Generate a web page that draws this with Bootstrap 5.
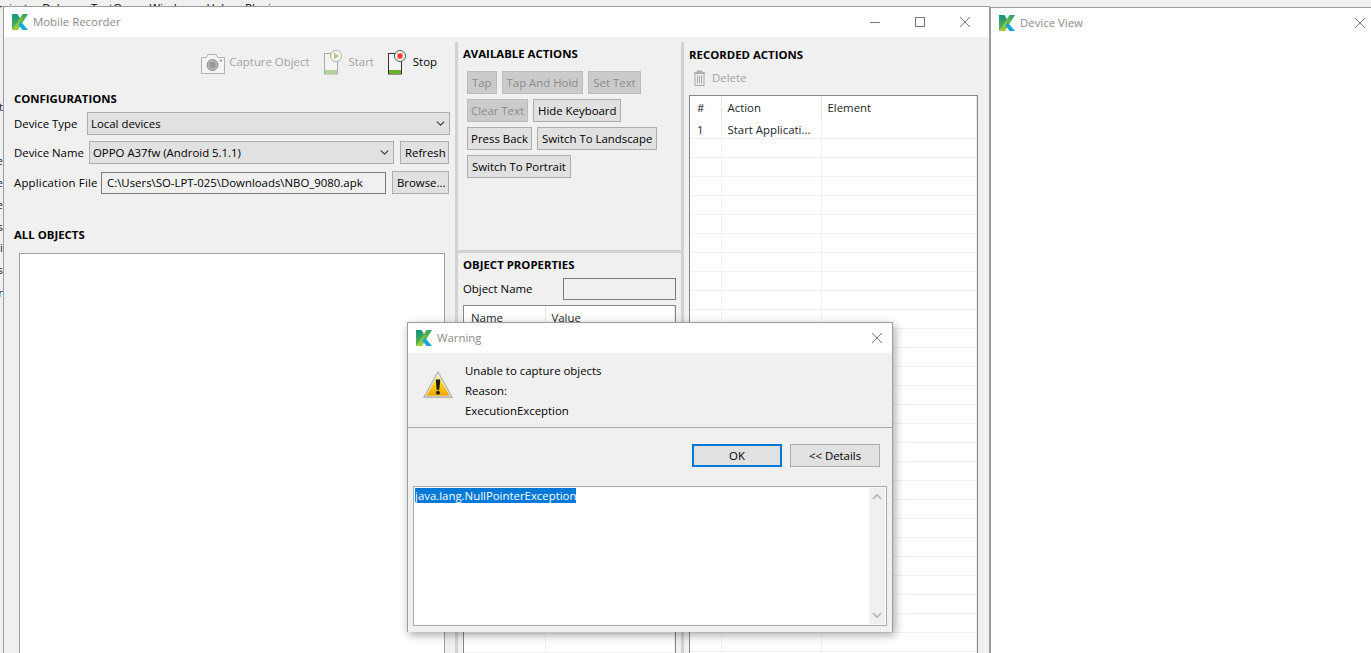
<!DOCTYPE html>
<html lang="en">
  <head>
    <meta charset="UTF-8" />
    <meta name="viewport" content="width=device-width, initial-scale=1.0" />
    <title>Mobile Recorder</title>
    <link href="https://cdn.jsdelivr.net/npm/bootstrap@5.3.0/dist/css/bootstrap.min.css" rel="stylesheet" />
    <style>
      html, body {
        height: 100%;
        overflow: hidden;
      }
      body {
        background-color: #f0f0f0;
        font-family: "Open Sans", "Liberation Sans", sans-serif;
        font-size: 11.4px;
        line-height: 16px;
        color: #000;
      }
      .app-menu {
        gap: 14px;
        margin-left: -9px;
        height: 16px;
      }
      .back-glyphs {
        position: absolute;
        left: 0;
        top: 0;
        width: 3px;
        height: 653px;
        overflow: hidden;
      }
      .back-glyphs span {
        position: absolute;
        right: 0;
        color: #222;
      }
      .os-window {
        position: absolute;
        background: #fff;
        border: 1px solid #9c9c9c;
        border-bottom: 0;
      }
      .win-main {
        left: 3px;
        top: 6px;
        width: 987px;
        height: 647px;
      }
      .win-device {
        left: 990px;
        top: 7px;
        width: 381px;
        height: 646px;
        border-right: 0;
      }
      .win-dialog {
        left: 407px;
        top: 322px;
        width: 486px;
        height: 310px;
        border-bottom: 1px solid #9c9c9c;
        box-shadow: 2px 3px 9px rgba(0, 0, 0, 0.35);
      }
      .title-bar {
        height: 30px;
        padding-left: 8px;
        color: #8a8a8a;
        background: #fff;
      }
      .title-bar svg.k-logo {
        margin-right: 5px;
        flex: none;
      }
      .win-controls {
        gap: 33px;
        margin-left: auto;
        padding-right: 18px;
      }
      .win-controls-device {
        padding-right: 5px;
      }
      .win-controls-dialog {
        padding-right: 9px;
      }
      .win-body {
        height: 616px;
        background: #f0f0f0;
      }
      .pane-left {
        width: 451px;
        padding: 0 5px 0 10px;
      }
      .pane-mid {
        width: 223px;
      }
      .pane-right {
        flex: 1;
        padding: 10px 11px 0 5px;
        min-width: 0;
      }
      .split-v {
        width: 3px;
        margin-top: 5px;
        background: #d2d2d2;
        flex: none;
      }
      .split-h {
        height: 3px;
        background: #d2d2d2;
        flex: none;
      }
      .tool-row {
        height: 54px;
        padding: 13px 13px 0 0;
        color: #a3a3a3;
      }
      .tool-item {
        gap: 4px;
      }
      .tool-item span {
        margin-bottom: 2px;
      }
      .tool-phone {
        gap: 7px;
      }
      .tool-item + .tool-item {
        margin-left: 14px;
      }
      .tool-on {
        color: #000;
      }
      .sect-title {
        font-weight: 700;
        height: 16px;
        white-space: nowrap;
      }
      .field-row {
        height: 23px;
      }
      .field-type { margin-top: 5px; }
      .field-name { margin-top: 6px; }
      .field-file { margin-top: 7px; }
      .form-select.win-select {
        height: 23px;
        padding: 0 20px 0 3px;
        font-size: 11.4px;
        line-height: 20px;
        border: 1px solid #adadad;
        border-radius: 0;
        background-color: #e1e1e1;
        background-size: 11px 9px;
        background-position: right 3px center;
        color: #000;
        min-width: 0;
      }
      .win-input {
        height: 22px;
        border: 1px solid #7a7a7a;
        background: #f0f0f0;
        padding: 0 5px;
        white-space: nowrap;
        line-height: 20px;
      }
      .btn.win-btn {
        height: 23px;
        padding: 0 4px;
        font-size: 11.4px;
        line-height: 20px;
        border: 1px solid #adadad;
        border-radius: 0;
        background: #e1e1e1;
        color: #000;
        white-space: nowrap;
      }
      .btn.win-btn:disabled {
        background: #cbcbcb;
        border-color: #bcbcbc;
        color: #8b8b8b;
        opacity: 1;
      }
      .btn.win-ok {
        border: 2px solid #0078d7;
      }
      .btn.bw-clear { width: 61px; padding: 0; }
      .btn.bw-press { width: 65px; padding: 0; }
      .lab-type { width: 73px; flex: none; margin: 0; }
      .lab-name { width: 75px; flex: none; margin: 0; }
      .lab-file { width: 87px; flex: none; margin: 0; letter-spacing: 0.2px; }
      .form-select.win-sel-name { width: 305px; flex: none; }
      .win-file { width: 285px; flex: none; }
      .btn.win-refresh { width: 49px; flex: none; margin-left: 6px; }
      .btn.win-browse { width: 57px; flex: none; margin-left: 6px; }
      .objects-title { margin-top: 33px; }
      .tree-box {
        flex: 1;
        margin: 10px 5px 0 5px;
        background: #fff;
        border: 1px solid #a0a0a0;
        border-bottom: 0;
      }
      .action-wrap {
        gap: 5px 5px;
        padding: 9px 20px 0 9px;
      }
      .pane-actions {
        height: 213px;
        padding-top: 9px;
      }
      .actions-title { padding-left: 5px; }
      .pane-props {
        flex: 1;
        padding: 4px 5px 0 5px;
        min-height: 0;
      }
      .props-name {
        margin: 5px 0;
      }
      .props-input {
        width: 113px;
      }
      .table.win-grid {
        margin: 0;
        table-layout: fixed;
        --bs-table-bg: #fff;
        font-size: 11.4px;
      }
      .win-grid th, .win-grid td {
        height: 19px;
        padding: 0 6px;
        line-height: 18px;
        font-weight: 400;
        border: 0;
        border-right: 1px solid #f0f0f0;
        border-bottom: 1px solid #f0f0f0;
        white-space: nowrap;
        overflow: hidden;
      }
      .win-grid th:first-child, .win-grid td:first-child {
        padding-left: 7px;
      }
      .win-grid th {
        height: 23px;
        line-height: 22px;
        border-right: 1px solid #e6e6e6;
        border-bottom: 0;
      }
      .win-grid tbody tr:first-child td {
        padding-top: 3px;
        line-height: 15px;
      }
      .grid-box {
        background: #fff;
        border: 1px solid #828790;
        border-bottom: 0;
        overflow: hidden;
        flex: 1;
        min-height: 0;
      }
      .delete-row {
        height: 25px;
        margin: 2px 0 5px 4px;
        gap: 6px;
        color: #a3a3a3;
      }
      .dlg-body {
        background: #f0f0f0;
        height: 279px;
      }
      .dlg-msg {
        height: 75px;
        padding: 8px 0 0 15px;
        border-bottom: 1px solid #a9a9a9;
      }
      .warn-icon {
        margin-top: 10px;
        flex: none;
      }
      .dlg-lines {
        margin-left: 12px;
      }
      .dlg-lines div {
        height: 20px;
        line-height: 20px;
      }
      .dlg-btns {
        padding: 16px 12px 0 0;
        gap: 8px;
      }
      .dlg-btns .btn.win-btn {
        width: 90px;
      }
      .detail-box {
        height: 140px;
        margin: 19px 5px 0 5px;
        background: #fff;
        border: 1px solid #a9a9a9;
        padding: 1px;
      }
      .detail-text {
        background: #0078d7;
        color: #fff;
        height: 15px;
        line-height: 15px;
      }
      .detail-scroll {
        width: 16px;
        height: 136px;
        background: #f0f0f0;
        margin-left: auto;
        padding: 5px 0;
      }
    </style>
  </head>
  <body>
    <div class="app-menu d-flex">
      <span>Project</span><span>Debug</span><span>TestOne</span><span>Window</span><span>Help</span><span>Plugin</span>
    </div>
    <div class="back-glyphs">
      <span style="top: 99px">t</span><span style="top: 153px">e</span><span style="top: 175px">e</span><span style="top: 197px">e</span><span style="top: 219px">s</span><span style="top: 240px">i</span><span style="top: 262px">s</span><span style="top: 285px">r</span>
    </div>

    <svg width="0" height="0" class="position-absolute">
      <defs>
        <linearGradient id="kLeft" x1="0" y1="0" x2="0" y2="1">
          <stop offset="0" stop-color="#14957f" />
          <stop offset="1" stop-color="#5fb548" />
        </linearGradient>
        <linearGradient id="kArm" x1="1" y1="0" x2="0" y2="1">
          <stop offset="0" stop-color="#1f9a6e" />
          <stop offset="0.5" stop-color="#7cc242" />
          <stop offset="1" stop-color="#a6ce39" />
        </linearGradient>
        <linearGradient id="warnFill" x1="0" y1="0" x2="0" y2="1">
          <stop offset="0" stop-color="#fff3a0" />
          <stop offset="0.4" stop-color="#fcd40f" />
          <stop offset="1" stop-color="#eea400" />
        </linearGradient>
        <symbol id="kMark" viewBox="0 0 16 16">
          <polygon points="0,0 5.5,0 9,6 3,13 0,16" fill="url(#kLeft)" />
          <polygon points="10.5,0 16,0 6,16 0,16" fill="url(#kArm)" />
          <polygon points="8.8,7.5 16,16 10.5,16 6.6,10.8" fill="#0fa9e0" />
        </symbol>
      </defs>
    </svg>

    <!-- main recorder window -->
    <div class="os-window win-main">
      <div class="title-bar d-flex align-items-center">
        <svg class="k-logo" width="16" height="16"><use href="#kMark" /></svg>
        <span>Mobile Recorder</span>
        <div class="win-controls d-flex align-items-center">
          <svg width="12" height="12" viewBox="0 0 12 12"><path d="M1 6.5h10" stroke="#777" fill="none" /></svg>
          <svg width="12" height="12" viewBox="0 0 12 12"><rect x="1.5" y="1.5" width="9" height="9" stroke="#777" fill="none" /></svg>
          <svg width="12" height="12" viewBox="0 0 12 12"><path d="M1 1l10 10M11 1L1 11" stroke="#777" fill="none" /></svg>
        </div>
      </div>
      <div class="win-body d-flex">
        <div class="pane-left d-flex flex-column">
          <div class="tool-row d-flex justify-content-end align-items-start">
            <div class="tool-item d-flex align-items-center">
              <svg width="24" height="25" viewBox="0 0 24 25">
                <path d="M.5 7.5h5l1.5-3h8l1.5 3h7v16h-23z" fill="#f4f4f4" stroke="#b0b0b0" />
                <circle cx="11.5" cy="15" r="5.5" fill="#b5b5b5" stroke="#8f8f8f" />
                <circle cx="11.5" cy="15" r="3.2" fill="#999" />
                <circle cx="20" cy="10.5" r="1.2" fill="#a8a8a8" />
              </svg>
              <span>Capture Object</span>
            </div>
            <div class="tool-item tool-phone d-flex align-items-center">
              <svg width="18" height="25" viewBox="0 0 18 25">
                <rect x="0.5" y="3.5" width="13" height="20.5" fill="#f4f4f4" stroke="#a9a9a9" />
                <rect x="1" y="20" width="12" height="4" fill="#b4d39a" />
                <circle cx="12" cy="6" r="5.5" fill="#fff" stroke="#a9a9a9" />
                <polygon points="10,2.5 15.5,6 10,9.5" fill="#a6d488" />
              </svg>
              <span>Start</span>
            </div>
            <div class="tool-item tool-phone tool-on d-flex align-items-center">
              <svg width="18" height="25" viewBox="0 0 18 25">
                <rect x="0.5" y="3.5" width="13" height="20.5" fill="#f4f4f4" stroke="#333" />
                <rect x="1" y="20" width="12" height="4" fill="#69b02f" />
                <circle cx="12" cy="6" r="5.5" fill="#fff" stroke="#555" />
                <rect x="9.5" y="3.5" width="5" height="5" fill="#f0392b" />
              </svg>
              <span>Stop</span>
            </div>
          </div>
          <div class="sect-title">CONFIGURATIONS</div>
          <div class="field-row field-type d-flex align-items-center">
            <label class="lab-type">Device Type</label>
            <select class="form-select win-select flex-fill"><option>Local devices</option></select>
          </div>
          <div class="field-row field-name d-flex align-items-center">
            <label class="lab-name">Device Name</label>
            <select class="form-select win-select win-sel-name"><option>OPPO A37fw (Android 5.1.1)</option></select>
            <button class="btn win-btn win-refresh">Refresh</button>
          </div>
          <div class="field-row field-file d-flex align-items-center">
            <label class="lab-file">Application File</label>
            <div class="win-input win-file">C:\Users\SO-LPT-025\Downloads\NBO_9080.apk</div>
            <button class="btn win-btn win-browse">Browse...</button>
          </div>
          <div class="sect-title objects-title">ALL OBJECTS</div>
          <div class="tree-box"></div>
        </div>
        <div class="split-v"></div>
        <div class="pane-mid d-flex flex-column">
          <div class="pane-actions">
            <div class="sect-title actions-title">AVAILABLE ACTIONS</div>
            <div class="action-wrap d-flex flex-wrap">
              <button class="btn win-btn" disabled>Tap</button>
              <button class="btn win-btn" disabled>Tap And Hold</button>
              <button class="btn win-btn" disabled>Set Text</button>
              <button class="btn win-btn bw-clear" disabled>Clear Text</button>
              <button class="btn win-btn">Hide Keyboard</button>
              <button class="btn win-btn bw-press">Press Back</button>
              <button class="btn win-btn">Switch To Landscape</button>
              <button class="btn win-btn">Switch To Portrait</button>
            </div>
          </div>
          <div class="split-h"></div>
          <div class="pane-props d-flex flex-column">
            <div class="sect-title">OBJECT PROPERTIES</div>
            <div class="props-name d-flex align-items-center justify-content-between">
              <span>Object Name</span>
              <div class="win-input props-input"></div>
            </div>
            <div class="grid-box">
              <table class="table win-grid" id="propsGrid">
                <colgroup><col style="width: 81px" /><col /></colgroup>
                <thead><tr><th>Name</th><th>Value</th></tr></thead>
                <tbody></tbody>
              </table>
            </div>
          </div>
        </div>
        <div class="split-v"></div>
        <div class="pane-right d-flex flex-column">
          <div class="sect-title">RECORDED ACTIONS</div>
          <div class="delete-row d-flex align-items-center">
            <svg width="13" height="16" viewBox="0 0 13 16">
              <path d="M1 3h11M4.5 3V1.2h4V3" stroke="#a8a8a8" stroke-width="1.4" fill="none" />
              <rect x="2" y="3.5" width="9" height="12" fill="none" stroke="#a8a8a8" />
              <path d="M4.5 5.5v8M6.5 5.5v8M8.5 5.5v8" stroke="#a8a8a8" fill="none" />
            </svg>
            <span>Delete</span>
          </div>
          <div class="grid-box">
            <table class="table win-grid" id="actionGrid">
              <colgroup><col style="width: 31px" /><col style="width: 100px" /><col /></colgroup>
              <thead><tr><th>#</th><th>Action</th><th>Element</th></tr></thead>
              <tbody><tr><td>1</td><td>Start Applicati...</td><td></td></tr></tbody>
            </table>
          </div>
        </div>
      </div>
    </div>

    <!-- device view window -->
    <div class="os-window win-device">
      <div class="title-bar d-flex align-items-center">
        <svg class="k-logo" width="16" height="16"><use href="#kMark" /></svg>
        <span>Device View</span>
        <div class="win-controls win-controls-device d-flex align-items-center">
          <svg width="12" height="12" viewBox="0 0 12 12"><path d="M1 1l10 10M11 1L1 11" stroke="#777" fill="none" /></svg>
        </div>
      </div>
    </div>

    <!-- warning dialog -->
    <div class="os-window win-dialog">
      <div class="title-bar d-flex align-items-center">
        <svg class="k-logo" width="16" height="16"><use href="#kMark" /></svg>
        <span>Warning</span>
        <div class="win-controls win-controls-dialog d-flex align-items-center">
          <svg width="12" height="12" viewBox="0 0 12 12"><path d="M1 1l10 10M11 1L1 11" stroke="#777" fill="none" /></svg>
        </div>
      </div>
      <div class="dlg-body">
        <div class="dlg-msg d-flex">
          <svg class="warn-icon" width="30" height="28" viewBox="0 0 32 30">
            <polygon points="16,0.5 31.5,28.5 0.5,28.5" fill="#b4b4b4" stroke="#b4b4b4" stroke-linejoin="round" />
            <polygon points="16,2.5 29.5,27 2.5,27" fill="#f4f4ec" />
            <polygon points="16,4.5 28.5,26.5 3.5,26.5" fill="url(#warnFill)" />
            <path d="M13.6 9h4.8l-1 11h-2.8z" fill="#1c1c1c" />
            <circle cx="16" cy="23.2" r="2.1" fill="#1c1c1c" />
          </svg>
          <div class="dlg-lines">
            <div>Unable to capture objects</div>
            <div>Reason:</div>
            <div>ExecutionException</div>
          </div>
        </div>
        <div class="dlg-btns d-flex justify-content-end">
          <button class="btn win-btn win-ok">OK</button>
          <button class="btn win-btn">&lt;&lt; Details</button>
        </div>
        <div class="detail-box d-flex">
          <div><div class="detail-text">java.lang.NullPointerException</div></div>
          <div class="detail-scroll d-flex flex-column justify-content-between align-items-center">
            <svg width="10" height="7" viewBox="0 0 10 7"><path d="M1 6l4-4 4 4" stroke="#b5b5b5" stroke-width="1.6" fill="none" /></svg>
            <svg width="10" height="7" viewBox="0 0 10 7"><path d="M1 1l4 4 4-4" stroke="#b5b5b5" stroke-width="1.6" fill="none" /></svg>
          </div>
        </div>
      </div>
    </div>

    <script>
      // fill the empty grid rows
      function addRows(id, count) {
        const body = document.querySelector("#" + id + " tbody");
        const cols = document.querySelectorAll("#" + id + " th").length;
        for (let i = 0; i < count; i++) {
          const row = body.insertRow();
          for (let c = 0; c < cols; c++) row.insertCell();
        }
      }
      addRows("propsGrid", 18);
      addRows("actionGrid", 28);
    </script>
    <script src="https://cdn.jsdelivr.net/npm/bootstrap@5.3.0/dist/js/bootstrap.bundle.min.js"></script>
  </body>
</html>
